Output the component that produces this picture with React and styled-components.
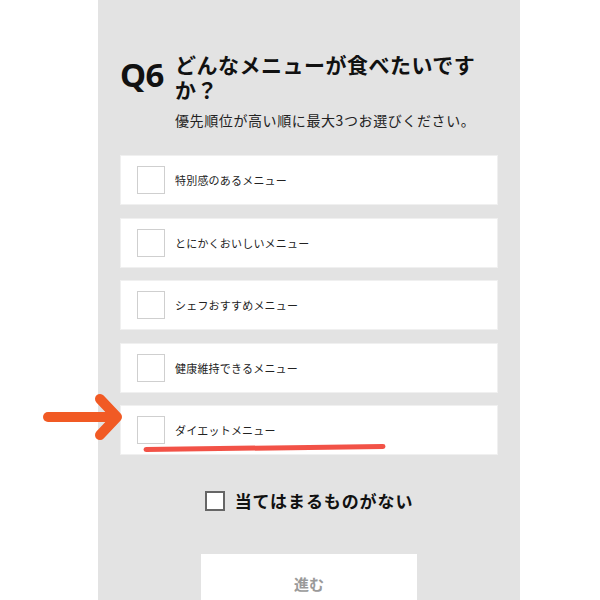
import React from 'react';
import styled, { createGlobalStyle } from 'styled-components';

const GlobalStyle = createGlobalStyle`
  html, body {
    margin: 0;
    padding: 0;
    background: #fff;
  }
  body {
    font-family: "Noto Sans CJK JP", "Noto Sans", sans-serif;
  }
`;

const Page = styled.div`
  position: relative;
  width: 600px;
  height: 600px;
  overflow: hidden;
  display: flex;
  padding-left: 98px;
  box-sizing: border-box;
`;

const Panel = styled.div`
  width: 422px;
  height: 600px;
  background: #e3e3e3;
  box-sizing: border-box;
  padding: 52px 22px 0 22px;
  display: flex;
  flex-direction: column;
`;

const Header = styled.div`
  display: flex;
  align-items: flex-start;
  gap: 11px;
`;

const QNum = styled.div`
  font-family: "Noto Sans", sans-serif;
  font-weight: 700;
  font-size: 33px;
  line-height: 1;
  color: #111;
  margin-top: 6px;
  letter-spacing: -0.5px;
`;

const HeadText = styled.div`
  display: flex;
  flex-direction: column;
`;

const Title = styled.div`
  font-weight: 700;
  font-size: 21px;
  line-height: 25px;
  color: #111;
  letter-spacing: 0.5px;
  white-space: nowrap;
`;

const Sub = styled.div`
  margin-top: 9px;
  font-size: 14px;
  line-height: 18px;
  color: #222;
  letter-spacing: 0.6px;
  white-space: nowrap;
`;

const List = styled.div`
  margin-top: 26px;
  display: flex;
  flex-direction: column;
  gap: 12.5px;
  width: 378px;
`;

const Card = styled.div`
  height: 50px;
  background: #fff;
  border: 1px solid #f0f0f0;
  box-sizing: border-box;
  display: flex;
  align-items: center;
  padding-left: 16px;
  gap: 10px;
`;

const Box = styled.span`
  width: ${p => p.$size}px;
  height: ${p => p.$size}px;
  box-sizing: border-box;
  border: ${p => p.$dark ? '2px solid #666' : '1.5px solid #cfcfcf'};
  background: #fff;
  flex: none;
`;

const Label = styled.span`
  font-size: 11px;
  color: #222;
  letter-spacing: 0.2px;
`;

const NoneRow = styled.div`
  margin-top: 33px;
  display: flex;
  align-items: center;
  justify-content: center;
  gap: 10px;
`;

const NoneLabel = styled.span`
  font-weight: 700;
  font-size: 17px;
  color: #111;
  letter-spacing: 0.9px;
`;

const Next = styled.button`
  margin: 41px auto 0;
  width: 216px;
  height: 60px;
  background: #fff;
  border: none;
  color: #9a9a9a;
  font-family: "Noto Sans CJK JP", sans-serif;
  font-weight: 700;
  font-size: 15px;
  padding: 0 0 2px 0;
  flex: none;
`;

const Overlay = styled.svg`
  position: absolute;
  left: 0;
  top: 0;
  pointer-events: none;
`;

const items = [
  '特別感のあるメニュー',
  'とにかくおいしいメニュー',
  'シェフおすすめメニュー',
  '健康維持できるメニュー',
  'ダイエットメニュー',
];

export default function App() {
  return (
    <>
      <GlobalStyle />
      <Page>
        <Panel>
          <Header>
            <QNum>Q6</QNum>
            <HeadText>
              <Title>どんなメニューが食べたいです<br />か？</Title>
              <Sub>優先順位が高い順に最大3つお選びください。</Sub>
            </HeadText>
          </Header>
          <List>
            {items.map(t => (
              <Card key={t}>
                <Box $size={28} />
                <Label>{t}</Label>
              </Card>
            ))}
          </List>
          <NoneRow>
            <Box $size={20} $dark />
            <NoneLabel>当てはまるものがない</NoneLabel>
          </NoneRow>
          <Next>進む</Next>
        </Panel>
        <Overlay width="600" height="600" viewBox="0 0 600 600">
          <g stroke="#f15a24" strokeWidth="10" strokeLinecap="round" strokeLinejoin="round" fill="none">
            <path d="M48 417 L112 417" />
            <path d="M100 399 L117 417 L100 435" />
          </g>
          <path d="M146 449.5 C220 448 300 447 383 446.5" stroke="#f03a2e" strokeWidth="5" strokeLinecap="round" fill="none" opacity="0.88" />
        </Overlay>
      </Page>
    </>
  );
}
